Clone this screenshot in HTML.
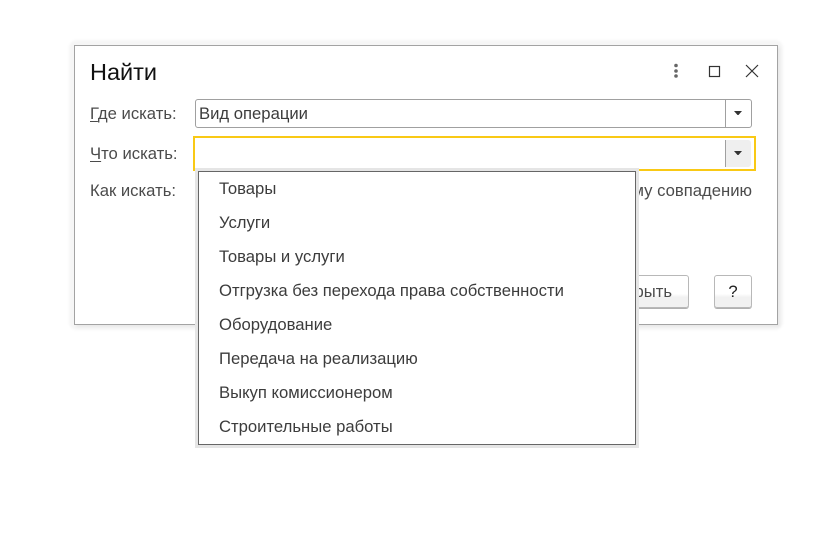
<!DOCTYPE html>
<html><head><meta charset="utf-8">
<style>
html,body{margin:0;padding:0;width:827px;height:534px;background:#fff;overflow:hidden}
body{font-family:"Liberation Sans",sans-serif;position:relative;color:#4b4b4b;font-size:16.67px}
.a{position:absolute;white-space:nowrap}
.t{line-height:20px}
.u{text-decoration:underline;text-underline-offset:2px;text-decoration-thickness:1px}
.i{left:219px;color:#3c3c3c}
.b{border:1px solid #b8b8b8;border-radius:3px;background:linear-gradient(#fff 0,#fff 58%,#f1f1f1 68%,#f1f1f1 100%);box-shadow:0 1px 0 #b0b0b0}
</style></head><body>
<div class="a" style="left:69px;top:40px;width:714px;height:290px;background:#f6f6f6;border-radius:8px;filter:blur(1px)"></div>
<div class="a" style="left:74px;top:45px;width:702px;height:278px;background:#fff;border:1px solid #a3a3a3;box-shadow:2px 2px 3px rgba(0,0,0,.06)"></div>
<div class="a" style="left:90px;top:57px;font-size:23.5px;line-height:30px;color:#111">Найти</div>
<svg class="a" style="left:665px;top:60px" width="100" height="22">
<circle cx="11" cy="5.500" r="1.800" fill="#666"/><circle cx="11" cy="11" r="1.800" fill="#666"/><circle cx="11" cy="16" r="1.800" fill="#666"/>
<rect x="44.500" y="6.500" width="10" height="10" fill="none" stroke="#333" stroke-width="1.200"/>
<path d="M81 5L93 17M93 5L81 17" stroke="#333" stroke-width="1.200" fill="none"/>
</svg>
<div class="a t" style="left:90px;top:104px"><span class="u">Г</span>де искать:</div>
<div class="a t" style="left:90px;top:144px"><span class="u">Ч</span>то искать:</div>
<div class="a t" style="left:90px;top:181px">Как искать:</div>
<div class="a" style="left:195px;top:99px;width:555px;height:27px;border:1px solid #a0a0a0;border-radius:3px;background:#fff"></div>
<div class="a t" style="left:199px;top:104px;color:#3c3c3c">Вид операции</div>
<div class="a" style="left:725px;top:100px;width:1px;height:27px;background:#a0a0a0"></div>
<svg class="a" style="left:733px;top:110px" width="10" height="6"><path d="M1 1H9L5.500 5H4.500Z" fill="#333"/></svg>
<div class="a" style="left:193px;top:136px;width:559px;height:31px;border:2px solid #f9c915;background:#fff"></div>
<div class="a" style="left:725px;top:140px;width:26px;height:27px;background:#efefef;border-left:1px solid #a0a0a0;border-radius:0 3px 3px 0;box-sizing:border-box"></div>
<svg class="a" style="left:733px;top:150px" width="10" height="6"><path d="M1 1H9L5.500 5H4.500Z" fill="#333"/></svg>
<div class="a t" style="right:75px;top:181px">по точному совпадению</div>
<div class="a b" style="left:610px;top:275px;width:77px;height:31px"></div>
<div class="a t" style="right:155px;top:282px">Закрыть</div>
<div class="a b" style="left:714px;top:275px;width:36px;height:31px"></div>
<div class="a t" style="left:714px;top:282px;width:38px;text-align:center;color:#222">?</div>
<div class="a" style="left:198px;top:171px;width:436px;height:272px;background:#fff;border:1px solid #666;box-shadow:0 0 0 3px #e5e5e5"></div>
<div class="a t i" style="top:179px">Товары</div>
<div class="a t i" style="top:213px">Услуги</div>
<div class="a t i" style="top:247px">Товары и услуги</div>
<div class="a t i" style="top:281px">Отгрузка без перехода права собственности</div>
<div class="a t i" style="top:315px">Оборудование</div>
<div class="a t i" style="top:349px">Передача на реализацию</div>
<div class="a t i" style="top:383px">Выкуп комиссионером</div>
<div class="a t i" style="top:417px">Строительные работы</div>
</body></html>
